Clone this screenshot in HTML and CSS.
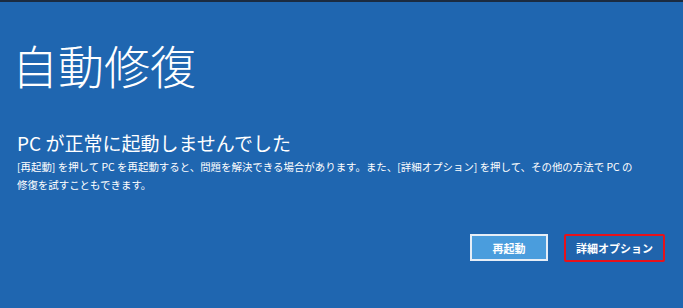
FILE: index.html
```html
<!DOCTYPE html>
<html lang="ja">
<head>
  <meta charset="UTF-8">
  <meta name="viewport" content="width=device-width, initial-scale=1.0">
  <title>自動修復</title>
  <link rel="stylesheet" href="styles.css">
</head>
<body>
<div class="screen">
  <h1 class="title">自動修復</h1>
  <h2 class="subtitle">PC が正常に起動しませんでした</h2>
  <p class="message">[再起動] を押して PC を再起動すると、問題を解決できる場合があります。また、[詳細オプション] を押して、その他の方法で PC の<br>修復を試すこともできます。</p>
  <div class="actions">
    <button class="btn btn-restart" type="button">再起動</button>
    <button class="btn btn-advanced" type="button">詳細オプション</button>
  </div>
</div>
</body>
</html>
```

FILE: styles.css
```css
html, body {
  margin: 0;
  height: 100%;
}
body {
  background-color: #1f66b0;
  font-family: "Noto Sans CJK JP", "Noto Sans", sans-serif;
  color: #fff;
  overflow: hidden;
}
.screen {
  border-top: 2px solid #1b2b40;
  padding: 34px 16px 0 17px;
}
.title {
  margin: 0 0 0 -5px;
  font-size: 46px;
  font-weight: 300;
  line-height: 56px;
}
.subtitle {
  margin: 38px 0 0;
  font-size: 19px;
  font-weight: 400;
  line-height: 26px;
}
.message {
  margin: 2px 0 0;
  font-size: 10.45px;
  line-height: 18px;
}
.actions {
  display: flex;
  justify-content: flex-end;
  gap: 16px;
  margin-top: 40px;
  padding-right: 2px;
}
.btn {
  font-family: inherit;
  font-size: 11px;
  font-weight: bold;
  color: #fff;
  height: 27px;
  padding: 0;
}
.btn-restart {
  width: 78px;
  background: #4a9ddd;
  border: 2px solid #e6eef7;
}
.btn-advanced {
  width: 101px;
  height: 28px;
  background: #2064ac;
  border: 2px solid #e8121a;
  border-radius: 2px;
}
```
